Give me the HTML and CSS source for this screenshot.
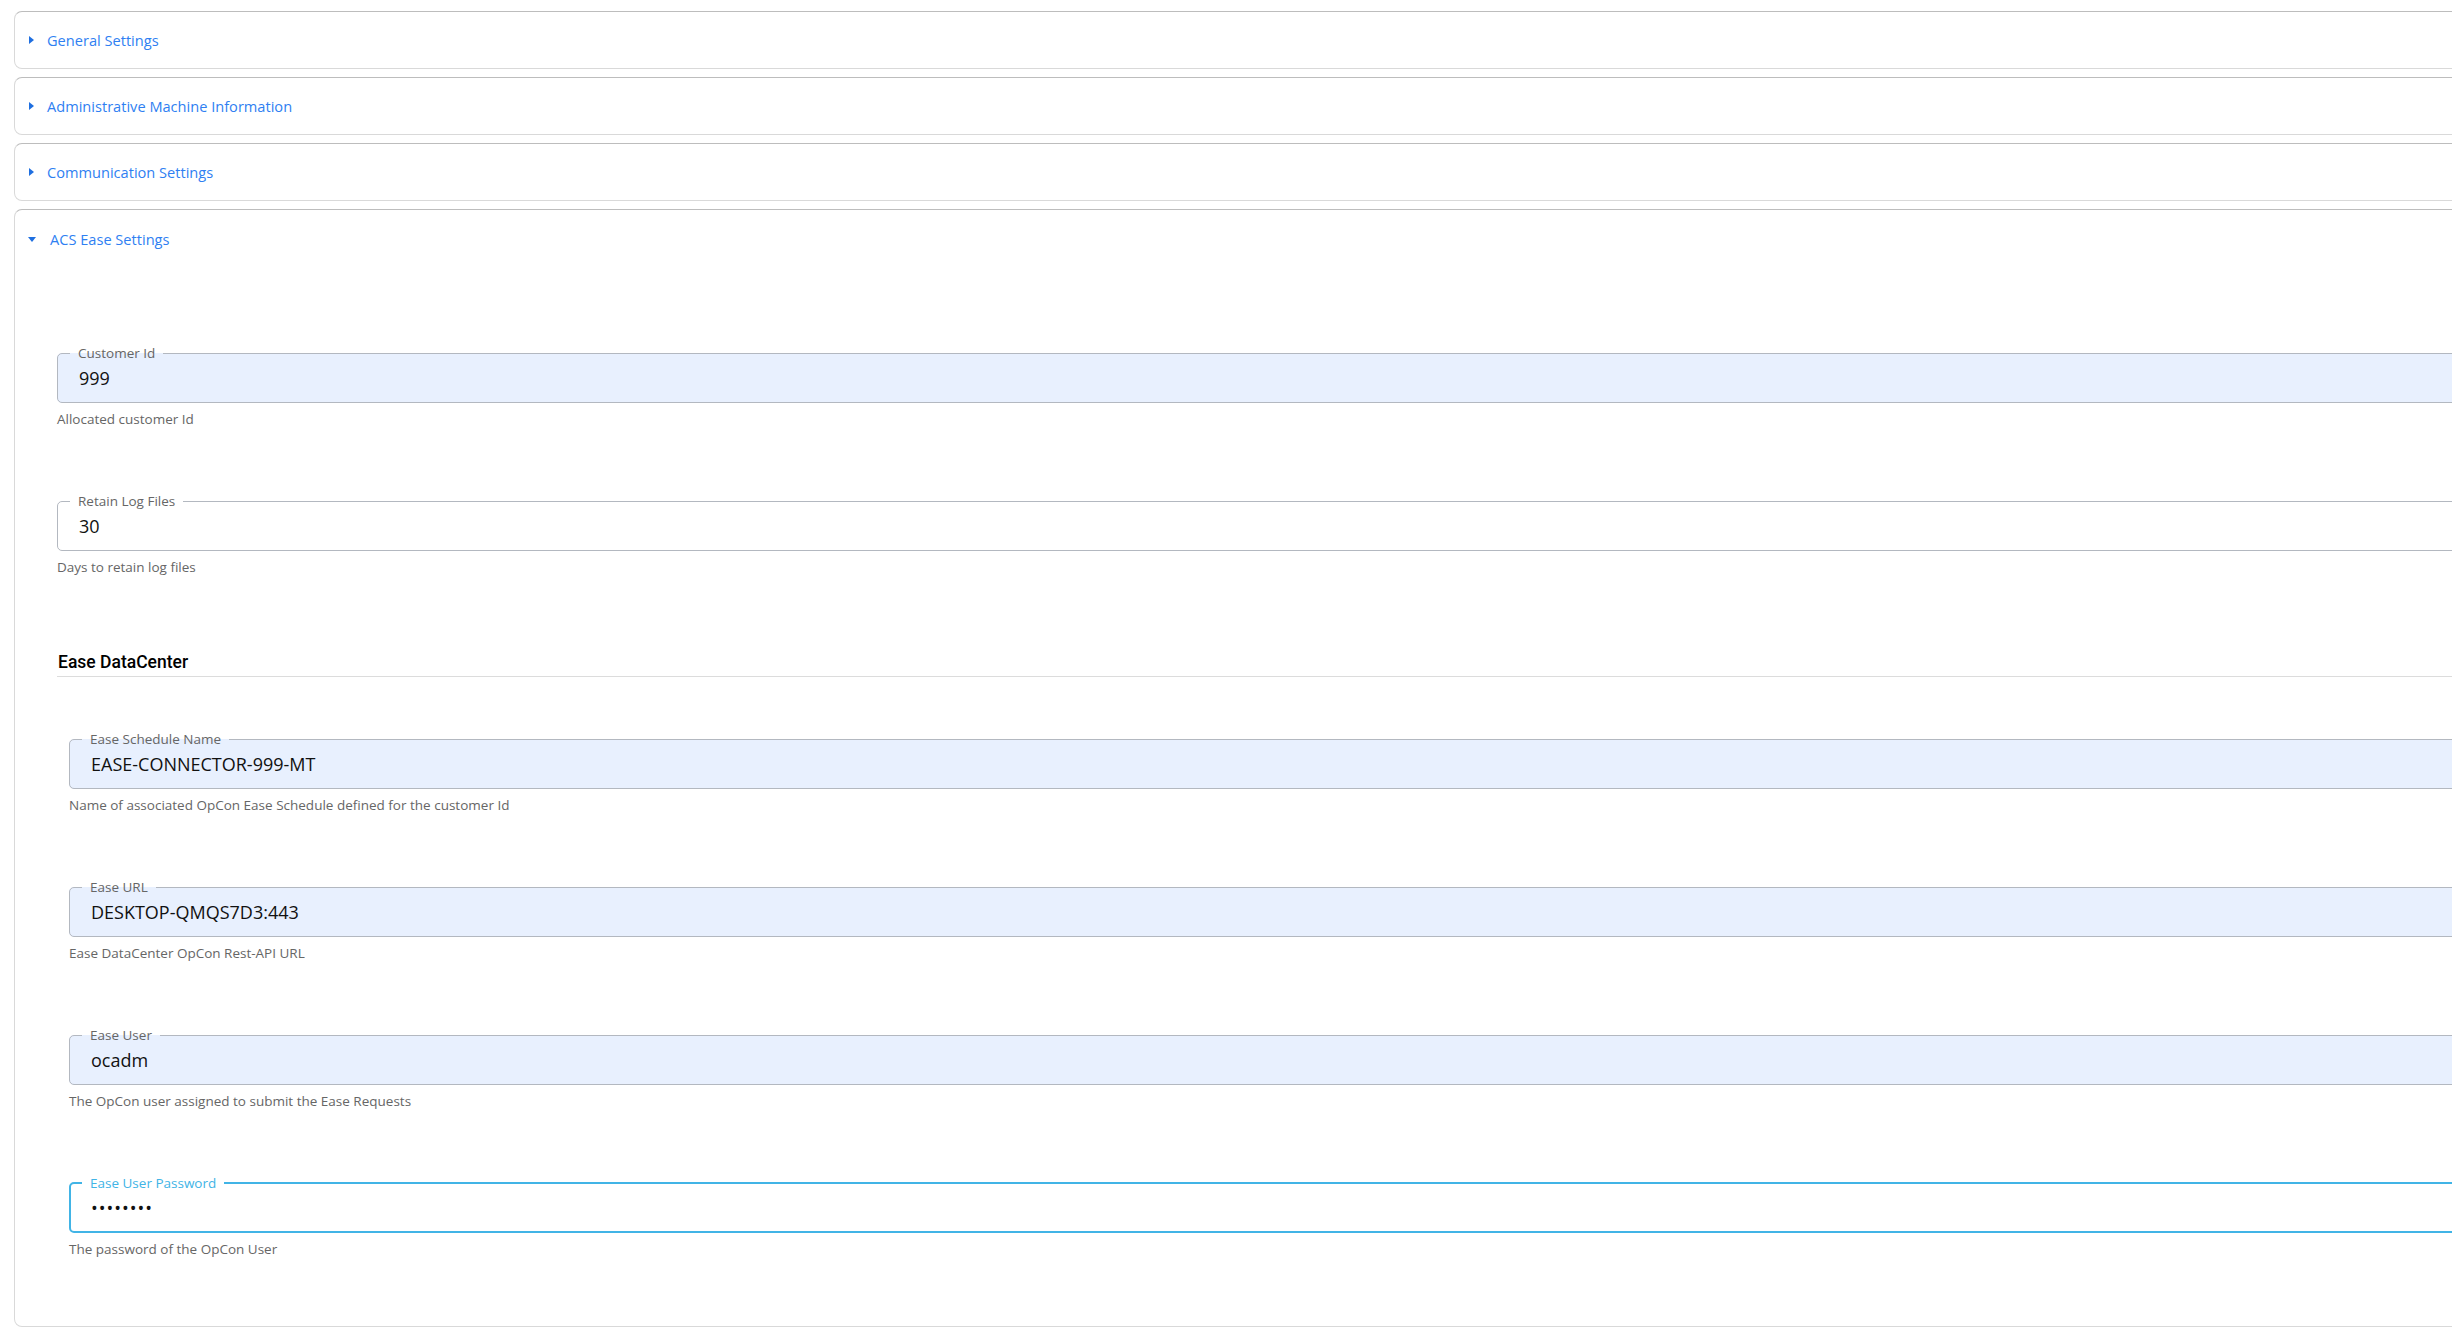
FILE: index.html
```html
<!DOCTYPE html>
<html>
<head>
  <title>Agent Settings</title>
  <link rel="stylesheet" href="styles.css">
</head>
<body>
  <div class="panels">
    <div class="panel">
      <div class="panel-header"><span class="caret-right"></span>General Settings</div>
    </div>
    <div class="panel">
      <div class="panel-header"><span class="caret-right"></span>Administrative Machine Information</div>
    </div>
    <div class="panel">
      <div class="panel-header"><span class="caret-right"></span>Communication Settings</div>
    </div>
    <div class="panel open">
      <div class="panel-header"><span class="caret-down"></span>ACS Ease Settings</div>
      <div class="panel-body">

        <div class="field">
          <fieldset class="outline filled">
            <legend>Customer Id</legend>
            <input type="text" value="999">
          </fieldset>
          <p class="hint">Allocated customer Id</p>
        </div>

        <div class="field">
          <fieldset class="outline">
            <legend>Retain Log Files</legend>
            <input type="text" value="30">
          </fieldset>
          <p class="hint">Days to retain log files</p>
        </div>

        <h3 class="section-title">Ease DataCenter</h3>

        <div class="section-fields">
          <div class="field">
            <fieldset class="outline filled">
              <legend>Ease Schedule Name</legend>
              <input type="text" value="EASE-CONNECTOR-999-MT">
            </fieldset>
            <p class="hint">Name of associated OpCon Ease Schedule defined for the customer Id</p>
          </div>

          <div class="field">
            <fieldset class="outline filled">
              <legend>Ease URL</legend>
              <input type="text" value="DESKTOP-QMQS7D3:443">
            </fieldset>
            <p class="hint">Ease DataCenter OpCon Rest-API URL</p>
          </div>

          <div class="field">
            <fieldset class="outline filled">
              <legend>Ease User</legend>
              <input type="text" value="ocadm">
            </fieldset>
            <p class="hint">The OpCon user assigned to submit the Ease Requests</p>
          </div>

          <div class="field last">
            <fieldset class="outline focused">
              <legend>Ease User Password</legend>
              <input type="password" value="password">
            </fieldset>
            <p class="hint">The password of the OpCon User</p>
          </div>
        </div>

      </div>
    </div>
  </div>
</body>
</html>
```

FILE: styles.css
```css
body {
  margin: 0;
  padding: 11px 0 0 14px;
  font-family: "Open Sans", Arial, sans-serif;
  background: #fff;
  overflow: hidden;
}
.panels {
  width: 2600px;
}
.panel {
  border: 1px solid #d9d9d9;
  border-top-color: #bdbdbd;
  border-radius: 8px;
  margin-bottom: 8px;
  background: #fff;
}
.panel-header {
  height: 56px;
  display: flex;
  align-items: center;
  padding-left: 14px;
  font-size: 14.6px;
  color: #2f7ff2;
}
.caret-right {
  width: 0;
  height: 0;
  border-top: 4px solid transparent;
  border-bottom: 4px solid transparent;
  border-left: 5px solid #1f6fe0;
  margin-right: 13px;
}
.open .panel-header {
  padding-left: 13px;
  padding-top: 1px;
}
.caret-down {
  width: 0;
  height: 0;
  border-left: 4px solid transparent;
  border-right: 4px solid transparent;
  border-top: 5px solid #1f6fe0;
  margin-right: 14px;
}
.panel-body {
  padding: 79px 0 68px 42px;
}
.field {
  margin-bottom: 66px;
}
.field.last {
  margin-bottom: 0;
}
.outline {
  margin: 0;
  padding: 0 0 6px 0;
  border: 1px solid #b3b8c0;
  border-radius: 5px;
  background: #fff;
  min-width: 0;
}
.outline.filled {
  background: #e8f0fe;
}
.outline legend {
  margin-left: 12px;
  padding: 0 8px;
  font-size: 13.5px;
  line-height: 14px;
  color: #666;
}
.outline input {
  display: block;
  width: 100%;
  box-sizing: border-box;
  height: 36px;
  padding: 0 0 0 21px;
  border: none;
  outline: none;
  background: transparent;
  font-family: "Open Sans", Arial, sans-serif;
  font-size: 18px;
  color: #111;
}
.outline.focused {
  border: 2px solid #41b4e6;
  padding-bottom: 5px;
}
.outline.focused legend {
  color: #41b4e6;
  margin-left: 11px;
}
.outline.focused input {
  padding-left: 20px;
  letter-spacing: 1px;
}
.hint {
  margin: 7px 0 0 0;
  font-size: 13.5px;
  line-height: 18px;
  color: #666;
}
.section-title {
  margin: 73px 0 55px 0;
  font-family: Roboto, Arial, sans-serif;
  font-weight: 500;
  font-size: 17.5px;
  line-height: 27px;
  color: #000;
  border-bottom: 1px solid #dcdcdc;
  padding-left: 1px;
}
.section-fields {
  padding-left: 12px;
}
```
